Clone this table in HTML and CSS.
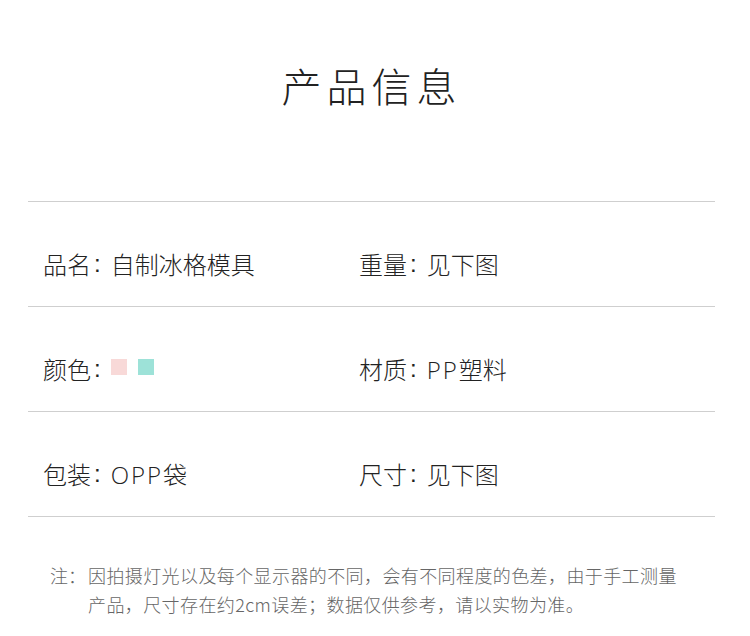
FILE: index.html
```html
<!DOCTYPE html>
<html lang="zh">
<head>
<meta charset="utf-8">
<link rel="stylesheet" href="styles.css">
</head>
<body>
<div class="page">
  <h1 class="title">产品信息</h1>
  <div class="table">
    <div class="row">
      <div class="cell"><span class="k">品名</span><span class="c">:</span><span class="v">自制冰格模具</span></div>
      <div class="cell"><span class="k">重量</span><span class="c">:</span><span class="v">见下图</span></div>
    </div>
    <div class="row">
      <div class="cell"><span class="k">颜色</span><span class="c">:</span><span class="swatch pink"></span><span class="swatch teal"></span></div>
      <div class="cell"><span class="k">材质</span><span class="c">:</span><span class="v"><span class="en">PP</span>塑料</span></div>
    </div>
    <div class="row">
      <div class="cell"><span class="k">包装</span><span class="c">:</span><span class="v"><span class="en">OPP</span>袋</span></div>
      <div class="cell"><span class="k">尺寸</span><span class="c">:</span><span class="v">见下图</span></div>
    </div>
  </div>
  <div class="note">
    <span class="note-label">注：</span>
    <span class="note-text">因拍摄灯光以及每个显示器的不同，会有不同程度的色差，由于手工测量产品，尺寸存在约2cm误差；数据仅供参考，请以实物为准。</span>
  </div>
</div>
</body>
</html>
```

FILE: styles.css
```css
html, body {
  margin: 0;
  padding: 0;
  background: #ffffff;
}
body {
  font-family: "Noto Sans CJK SC", "Noto Sans", sans-serif;
  color: #333333;
}
.page {
  width: 750px;
  height: 636px;
  padding: 0 35px 0 28px;
  box-sizing: border-box;
}
.title {
  margin: 0;
  height: 201px;
  box-sizing: border-box;
  padding-top: 55px;
  text-align: center;
  font-size: 40px;
  line-height: 60px;
  font-weight: 200;
  letter-spacing: 5px;
  color: #222222;
}
.table {
  border-top: 1px solid #cfcfcf;
}
.row {
  display: grid;
  grid-template-columns: 316px 1fr;
  border-bottom: 1px solid #cfcfcf;
  padding: 47px 0 0 15px;
  box-sizing: border-box;
  height: 105px;
  align-items: start;
}
.cell {
  font-size: 24px;
  line-height: 30px;
  height: 30px;
  font-weight: 300;
  color: #222222;
  display: flex;
  align-items: center;
  white-space: nowrap;
}
.c {
  font-family: "Liberation Sans", sans-serif;
  margin: 0 10px 0 3px;
}
.en {
  font-family: "Open Sans", sans-serif;
  font-weight: 300;
  font-size: 24px;
  letter-spacing: 2px;
}
.swatch {
  display: inline-block;
  width: 16px;
  height: 16px;
  margin-top: -4px;
}
.swatch.pink {
  background: #f8d9d8;
}
.swatch.teal {
  background: #9de2d8;
  margin-left: 11px;
}
.note {
  display: flex;
  padding: 44px 0 0 22px;
  font-size: 18px;
  line-height: 29px;
  color: #666666;
  font-weight: 300;
}
.note-label {
  flex: none;
  width: 38px;
}
.note-text {
  width: 592px;
  letter-spacing: 0.4px;
}
```
